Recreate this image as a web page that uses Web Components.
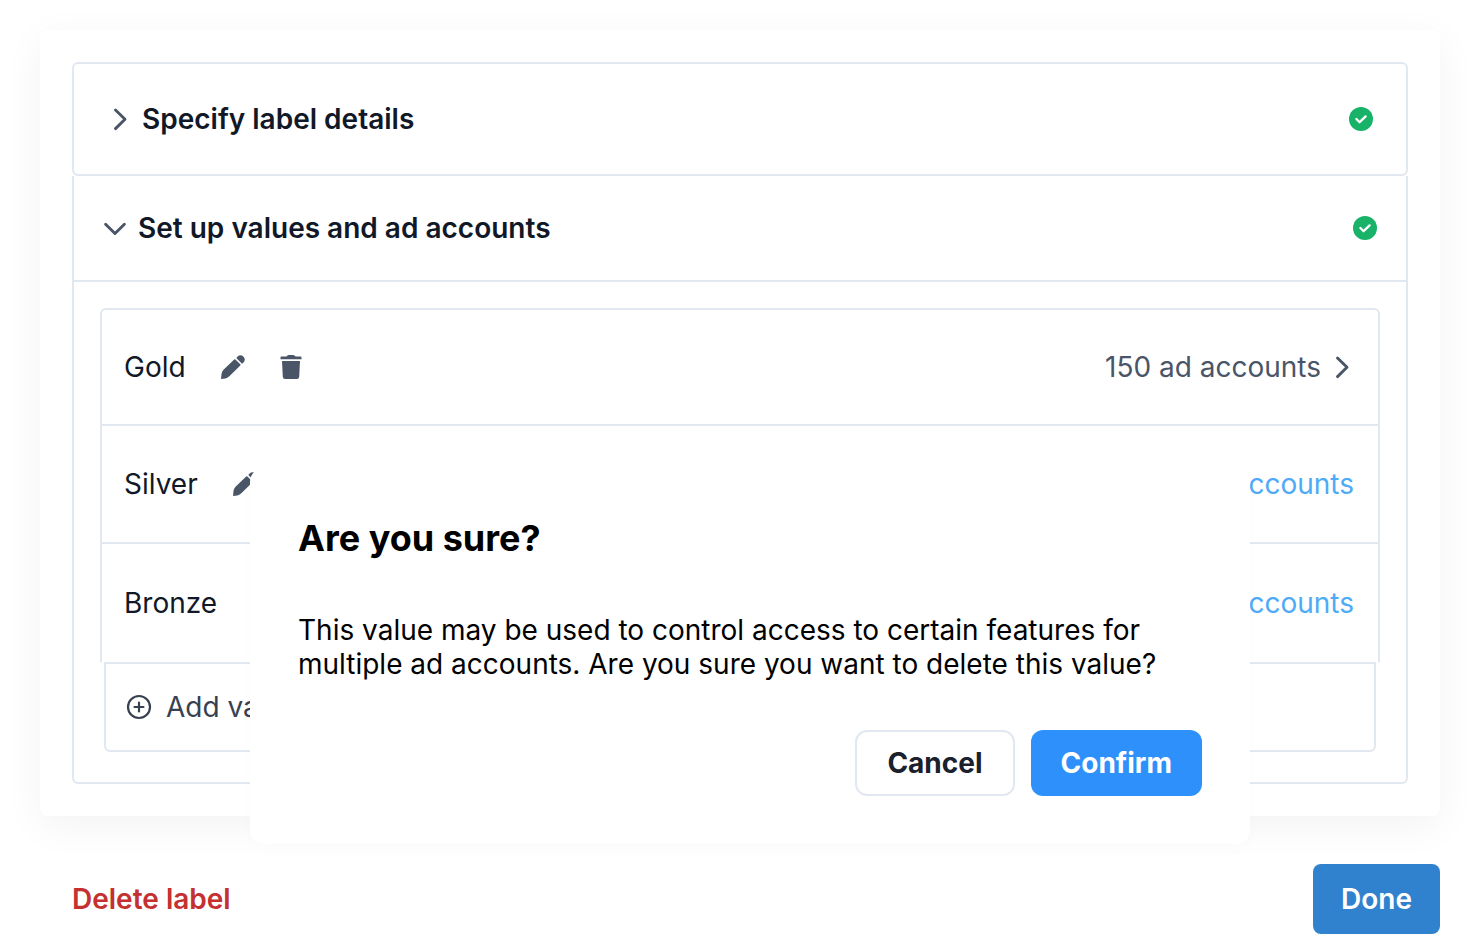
<!DOCTYPE html>
<html lang="en">
<head>
  <meta charset="utf-8">
  <meta name="viewport" content="width=device-width, initial-scale=1">
  <title>Label setup</title>
  <style>
    body {
      margin: 0;
      background: #fff;
      color: #111827;
      font-family: Inter, 'Liberation Sans', sans-serif;
      font-size: 28px;
      line-height: 34px;
      --line: #e2e8f0;
      --icon: #4a5568;
    }
  </style>
</head>
<body>
  <label-page></label-page>

  <script>
    const icons = {
      right: '<path d="M9.500 5l9.500 9.300-9.500 9.300" fill="none" stroke="currentColor" stroke-width="2.900" stroke-linecap="round" stroke-linejoin="round"/>',
      down: '<path d="M3.600 10.200l9.400 9.300 9.400-9.300" fill="none" stroke="currentColor" stroke-width="2.900" stroke-linecap="round" stroke-linejoin="round"/>',
      check: '<circle cx="14" cy="14" r="12" fill="#18b368"/><path d="M9.400 14l3.200 3.200 6-5.800" fill="none" stroke="#fff" stroke-width="2.300" stroke-linecap="round" stroke-linejoin="round"/>',
      plus: '<g fill="none" stroke="currentColor" stroke-width="2.200" stroke-linecap="round"><circle cx="14" cy="14" r="11"/><path d="M9.500 14h9M14 9.500v9"/></g>',
      pencil: '<path fill="currentColor" d="M2 26l.5-5q.3-2.600 2-4.300L15.200 6.500q.6-.5 1.200 0l4.900 4.800q.5.600 0 1.200L10.600 23q-1.800 1.900-4.200 2.400zM17.300 4.900l1.300-1.500q2.900-2.500 5.700.1 2.900 3 .2 5.900l-1.500 1.300z"/>',
      trash: '<path fill="currentColor" d="M4.400 3.500h5.100q.8-1.500 2.200-1.500h4.600q1.400 0 2.200 1.500h5.100q.9 0 .9.900v1.800h-21V4.400q0-.9.900-.9zM5 8h18l-.8 15.700q-.2 2.300-2.300 2.300H8.100q-2.100 0-2.300-2.300z"/>'
    };

    class UiIcon extends HTMLElement {
      constructor() {
        super();
        this.attachShadow({ mode: 'open' });
      }

      connectedCallback() {
        this.shadowRoot.innerHTML = `
          <style>
            :host { display: block; flex: none; width: 28px; height: 28px; }
            svg { display: block; width: 100%; height: 100%; }
          </style>
          <svg viewBox="0 0 28 28" aria-hidden="true">${icons[this.getAttribute('name')]}</svg>
        `;
      }
    }

    class UiButton extends HTMLElement {
      constructor() {
        super();
        this.attachShadow({ mode: 'open' });
      }

      connectedCallback() {
        this.shadowRoot.innerHTML = `
          <style>
            :host { display: block; }
            button {
              display: block;
              font: inherit;
              font-weight: 700;
              padding: 16px 30px;
              border: 0;
              border-radius: 12px;
              color: #fff;
              background: #2e90fa;
              cursor: pointer;
            }
            :host([kind="outline"]) button {
              padding: 14px 30px;
              border: 2px solid var(--line);
              color: #1a202c;
              background: #fff;
            }
            :host([kind="primary"]) button {
              padding: 18px 28px;
              border-radius: 8px;
              background: #3182ce;
              font-weight: 600;
            }
            :host([kind="danger"]) button {
              padding: 0;
              color: #c53030;
              background: none;
              font-weight: 600;
            }
          </style>
          <button type="button"><slot></slot></button>
        `;
      }
    }

    class StepSection extends HTMLElement {
      constructor() {
        super();
        this.attachShadow({ mode: 'open' });
      }

      connectedCallback() {
        const open = this.hasAttribute('open');
        this.shadowRoot.innerHTML = `
          <style>
            :host {
              display: block;
              border: 2px solid var(--line);
              border-radius: 6px;
            }
            :host([open]) {
              border-top: 0;
              border-radius: 0 0 6px 6px;
            }
            h2 { margin: 0; font: inherit; }
            button {
              display: flex;
              align-items: center;
              gap: 8px;
              width: 100%;
              padding: 38px 31px 38px 32px;
              border: 0;
              background: none;
              color: inherit;
              font: inherit;
              font-weight: 600;
              text-align: left;
              cursor: pointer;
            }
            :host([open]) button {
              padding: 35px 27px 35px 28px;
              border-bottom: 2px solid var(--line);
            }
            .title { flex: 1; }
            .arrow { color: var(--icon); }
            .content { padding: 26px 26px 30px; }
          </style>
          <h2>
            <button type="button" aria-expanded="${open}">
              <ui-icon class="arrow" name="${open ? 'down' : 'right'}"></ui-icon>
              <span class="title">${this.getAttribute('heading')}</span>
              <ui-icon name="check"></ui-icon>
            </button>
          </h2>
          ${open ? '<div class="content"><slot></slot></div>' : ''}
        `;
      }
    }

    class ValueRow extends HTMLElement {
      constructor() {
        super();
        this.attachShadow({ mode: 'open' });
      }

      connectedCallback() {
        const name = this.getAttribute('name');
        const count = this.getAttribute('count');
        this.shadowRoot.innerHTML = `
          <style>
            :host {
              display: flex;
              align-items: center;
              box-sizing: border-box;
              min-height: 118px;
              padding: 0 24px 0 22px;
              border: solid var(--line);
              border-width: 0 2px 2px;
            }
            :host(:first-of-type) { border-top-width: 2px; border-radius: 6px 6px 0 0; }
            :host(:last-of-type) { border-bottom-width: 0; }
            .tools { display: flex; gap: 30px; margin-left: 33px; }
            button {
              padding: 0;
              border: 0;
              background: none;
              color: var(--icon);
              cursor: pointer;
            }
            a {
              display: flex;
              align-items: center;
              gap: 7px;
              margin-left: auto;
              color: #4dabf7;
              text-decoration: none;
            }
            a.assigned { color: var(--icon); }
            a ui-icon { margin-right: -2px; }
          </style>
          <span>${name}</span>
          <div class="tools">
            <button type="button" aria-label="Edit ${name}"><ui-icon name="pencil"></ui-icon></button>
            <button type="button" aria-label="Delete ${name}"><ui-icon name="trash"></ui-icon></button>
          </div>
          ${count
            ? `<a class="assigned" href="#">${count} ad accounts<ui-icon name="right"></ui-icon></a>`
            : '<a href="#">Add ad accounts</a>'}
        `;
      }
    }

    class AddValue extends HTMLElement {
      constructor() {
        super();
        this.attachShadow({ mode: 'open' });
      }

      connectedCallback() {
        this.shadowRoot.innerHTML = `
          <style>
            :host {
              display: block;
              margin: 0 4px;
              border: 2px solid var(--line);
              border-radius: 0 0 6px 6px;
            }
            button {
              display: flex;
              align-items: center;
              gap: 13px;
              width: 100%;
              padding: 26px 19px;
              border: 0;
              background: none;
              color: #374151;
              font: inherit;
              cursor: pointer;
            }
          </style>
          <button type="button"><ui-icon name="plus"></ui-icon><slot></slot></button>
        `;
      }
    }

    class ConfirmDialog extends HTMLElement {
      constructor() {
        super();
        this.attachShadow({ mode: 'open' });
      }

      connectedCallback() {
        this.shadowRoot.innerHTML = `
          <style>
            :host {
              display: block;
              box-sizing: border-box;
              padding: 48px;
              border-radius: 14px;
              background: #fff;
              color: #000;
              box-shadow: 0 8px 24px rgba(0, 0, 0, 0.01);
            }
            h3 {
              margin: 0 0 53px;
              font-size: 36px;
              font-weight: 700;
              line-height: 44px;
            }
            p { margin: 0 0 49px; }
            .actions { display: flex; justify-content: flex-end; gap: 16px; }
          </style>
          <section role="dialog" aria-labelledby="title">
            <h3 id="title">${this.getAttribute('heading')}</h3>
            <p><slot></slot></p>
            <div class="actions">
              <ui-button kind="outline">Cancel</ui-button>
              <ui-button>Confirm</ui-button>
            </div>
          </section>
        `;
      }
    }

    class LabelPage extends HTMLElement {
      constructor() {
        super();
        this.attachShadow({ mode: 'open' });
      }

      connectedCallback() {
        this.shadowRoot.innerHTML = `
          <style>
            :host {
              display: block;
              position: relative;
              padding: 30px 40px 0;
            }
            .card {
              padding: 32px;
              border-radius: 8px;
              background: #fff;
              box-shadow: 0 10px 40px rgba(0, 0, 0, 0.05);
            }
            footer {
              display: flex;
              align-items: center;
              justify-content: space-between;
              padding: 48px 0 0 32px;
            }
            /* sits over the value list */
            confirm-dialog {
              position: absolute;
              top: 468px;
              left: 250px;
              right: 230px;
            }
          </style>
          <main class="card">
            <step-section heading="Specify label details"></step-section>
            <step-section heading="Set up values and ad accounts" open>
              <value-row name="Gold" count="150"></value-row>
              <value-row name="Silver"></value-row>
              <value-row name="Bronze"></value-row>
              <add-value>Add value</add-value>
            </step-section>
          </main>
          <footer>
            <ui-button kind="danger">Delete label</ui-button>
            <ui-button kind="primary">Done</ui-button>
          </footer>
          <confirm-dialog heading="Are you sure?">This value may be used to control access to certain features for multiple ad accounts. Are you sure you want to delete this value?</confirm-dialog>
        `;
      }
    }

    customElements.define('ui-icon', UiIcon);
    customElements.define('ui-button', UiButton);
    customElements.define('step-section', StepSection);
    customElements.define('value-row', ValueRow);
    customElements.define('add-value', AddValue);
    customElements.define('confirm-dialog', ConfirmDialog);
    customElements.define('label-page', LabelPage);
  </script>
</body>
</html>
